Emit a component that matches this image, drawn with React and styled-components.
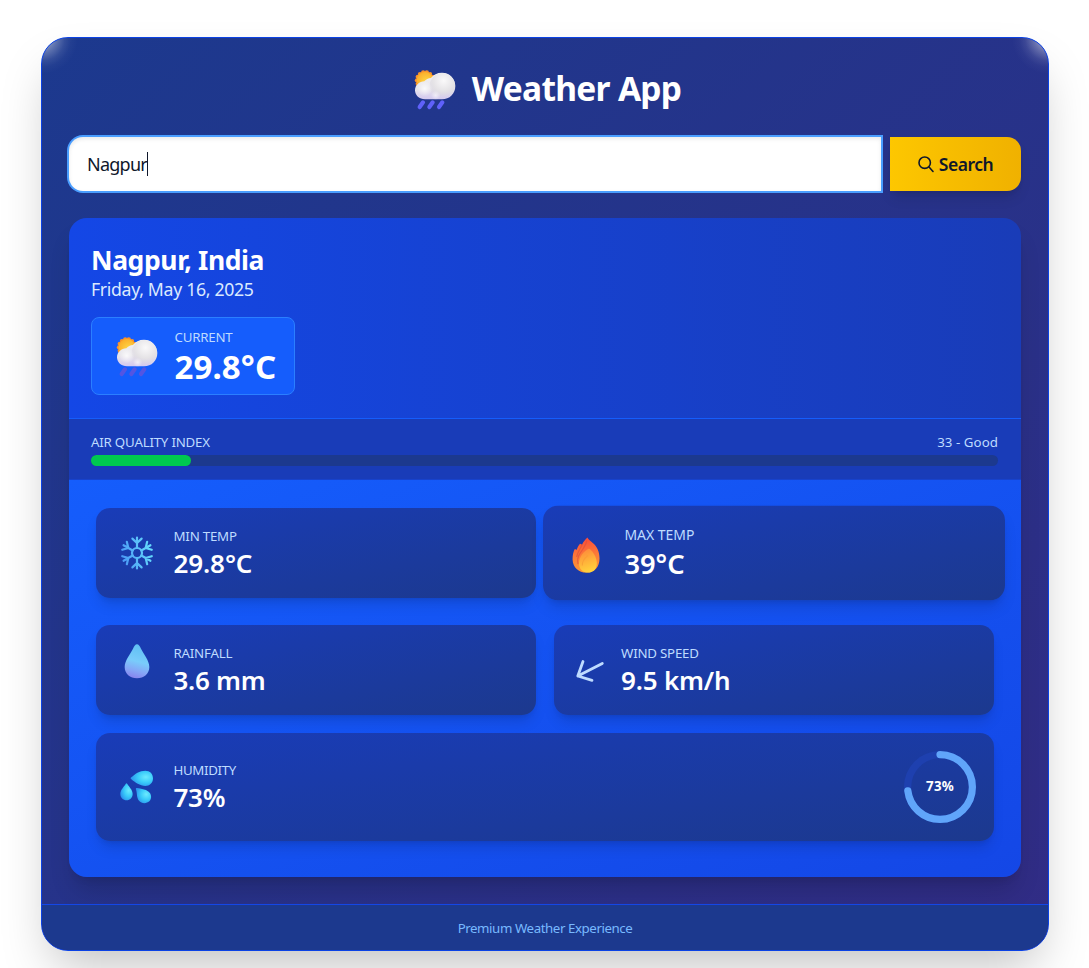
import React from 'react';
import styled, { createGlobalStyle } from 'styled-components';

const GlobalStyle = createGlobalStyle`
  *, *::before, *::after { box-sizing: border-box; }
  html, body { margin: 0; background: #fff; }
  body {
    height: 968px;
    overflow: hidden;
    font-family: "Noto Sans", "Open Sans", sans-serif;
    color: #fff;
  }
  svg { display: block; flex: none; overflow: visible; }
  h1, h2, p { margin: 0; }
`;

const Page = styled.main`
  display: flex;
  justify-content: center;
  padding-top: 37px;
  padding-left: 1px;
`;

const Shell = styled.section`
  width: 1008px;
  height: 914px;
  display: flex;
  flex-direction: column;
  overflow: hidden;
  border: 1px solid #0b42e4;
  border-radius: 27px;
  background:
    radial-gradient(circle at 0 0, rgba(255, 255, 255, 0.46) 8px, rgba(255, 255, 255, 0.28) 15px, rgba(255, 255, 255, 0.1) 23px, rgba(255, 255, 255, 0.03) 29px, rgba(255, 255, 255, 0) 36px),
    radial-gradient(circle at 100% 0, rgba(255, 255, 255, 0.46) 8px, rgba(255, 255, 255, 0.28) 15px, rgba(255, 255, 255, 0.1) 23px, rgba(255, 255, 255, 0.03) 29px, rgba(255, 255, 255, 0) 36px),
    linear-gradient(to bottom right, #1c398e, #312c85);
  box-shadow: 0 25px 50px -12px rgba(0, 0, 0, 0.25);
`;

const Content = styled.div`
  padding: 25px 27px 27px;
`;

const TitleBar = styled.header`
  display: flex;
  align-items: center;
  justify-content: center;
  height: 54px;
  gap: 16px;
  padding-left: 5px;
  margin-bottom: 20px;
`;

const Title = styled.h1`
  padding-bottom: 3px;
  font-size: 33.5px;
  line-height: 51px;
  font-weight: 700;
  letter-spacing: -0.7px;
`;

const SearchForm = styled.div`
  display: flex;
  gap: 8px;
  height: 54px;
  margin-bottom: 27px;
`;

const SearchField = styled.div`
  display: flex;
  align-items: center;
  width: 812px;
  margin-right: 1px;
  padding-left: 18px;
  border-radius: 14px 0 0 14px;
  background: #fff;
  color: #0f172b;
  font-size: 18px;
  letter-spacing: -0.75px;
  box-shadow: 0 0 0 2px #4a9eff, inset 0 2px 4px rgba(0, 0, 0, 0.09);
`;

const Caret = styled.span`
  width: 1px;
  height: 24px;
  background: #0f172b;
`;

const SearchButton = styled.button`
  flex: 1;
  display: flex;
  align-items: center;
  justify-content: center;
  gap: 5px;
  padding: 0;
  border: 0;
  border-radius: 0 14px 14px 0;
  background: linear-gradient(to right, #fdc700, #f0b100);
  color: #0f172b;
  font: 600 17.5px "Noto Sans", sans-serif;
  letter-spacing: -0.5px;
  box-shadow: 0 9px 14px -3px rgba(0, 0, 0, 0.12), 0 4px 6px -4px rgba(0, 0, 0, 0.12);
`;

const WeatherCard = styled.article`
  border-radius: 18px;
  overflow: hidden;
  box-shadow: 0 18px 24px -5px rgba(0, 0, 0, 0.16), 0 7px 9px -6px rgba(0, 0, 0, 0.12);
`;

const Summary = styled.div`
  height: 201px;
  padding: 25px 22px 0;
  border-bottom: 1px solid #155dfc;
  background: linear-gradient(to right, #1447e6, #193cb8);
`;

const Place = styled.h2`
  font-size: 26.5px;
  line-height: 34px;
  font-weight: 700;
  letter-spacing: -0.4px;
`;

const DateLine = styled.p`
  margin-bottom: 16px;
  color: #dbeafe;
  font-size: 17.7px;
  line-height: 24px;
  letter-spacing: -0.33px;
`;

const CurrentBox = styled.div`
  display: flex;
  align-items: center;
  gap: 16.5px;
  width: 204px;
  height: 78px;
  padding: 2px 0 0 24px;
  border: 1px solid #2b7fff;
  border-radius: 8px;
  background: #155dfc;
`;

const Label = styled.div`
  color: #bedbff;
  font-size: 13.3px;
  line-height: 20px;
  letter-spacing: ${(p) => p.$spacing || '-0.22px'};
  white-space: nowrap;
`;

const Reading = styled.div`
  font-size: ${(p) => (p.$large ? '33px' : '26px')};
  line-height: ${(p) => (p.$large ? '40px' : '34px')};
  font-weight: ${(p) => (p.$large ? 700 : 600)};
  letter-spacing: ${(p) => p.$spacing || '-0.3px'};
  white-space: nowrap;
`;

const AirQuality = styled.div`
  height: 61px;
  padding: 13px 23px 0 22px;
  border-bottom: 1px solid #1742cc;
  background: #193cb8;
`;

const AirRow = styled.div`
  display: flex;
  justify-content: space-between;
  margin-bottom: 3px;
`;

const Meter = styled.div`
  height: 11px;
  border-radius: 6px;
  background: #1c398e;
`;

const MeterFill = styled.div`
  height: 100%;
  border-radius: 6px;
  background: #00c950;
`;

const Metrics = styled.div`
  display: grid;
  grid-template-columns: 440px 440px;
  grid-template-rows: 99px 90px 108px;
  gap: 18px;
  padding: 28px 27px 36px;
  background: linear-gradient(to bottom right, #155dfc, #1447e6);
`;

const Metric = styled.div`
  display: flex;
  align-items: center;
  height: ${(p) => (p.$wide ? '108px' : '90px')};
  grid-column: ${(p) => (p.$wide ? '1 / -1' : 'auto')};
  padding: 0 18px 0 22.5px;
  border-radius: 14px;
  background: linear-gradient(to bottom right, #193cb8, #1c398e);
  box-shadow: 0 9px 14px -3px rgba(0, 0, 0, 0.13), 0 4px 6px -4px rgba(0, 0, 0, 0.13);
  transform: ${(p) => (p.$active ? 'scale(1.05)' : 'none')};
`;

const IconSlot = styled.div`
  display: flex;
  flex: none;
  justify-content: center;
  width: ${(p) => (p.$narrow ? '26px' : '36px')};
  margin-right: ${(p) => (p.$narrow ? '18.5px' : '19px')};
  padding-top: ${(p) => p.$lowered || 0}px;
  padding-bottom: ${(p) => (p.$raised ? '18px' : '0')};
`;

const MetricText = styled.div`
  flex: 1;
`;

const Gauge = styled.div`
  display: grid;
  place-items: center;
  width: 72px;
  height: 72px;
  > * { grid-area: 1 / 1; }
`;

const GaugeValue = styled.span`
  font-size: 13.3px;
  line-height: 20px;
  font-weight: 700;
  letter-spacing: 0.2px;
  padding-bottom: 3px;
`;

const Footer = styled.footer`
  flex: 1;
  display: flex;
  align-items: center;
  justify-content: center;
  border-top: 1px solid #1447e6;
  background: #1c398e;
  color: #78b9ff;
  font-size: 13.3px;
  letter-spacing: -0.43px;
`;

function SunRainIcon({ id, dim }) {
  const teeth = Array.from({ length: 14 }, (_, i) => {
    const a = (i / 14) * Math.PI * 2;
    return <circle key={i} cx={33 + Math.cos(a) * 24} cy={31 + Math.sin(a) * 24} r="6.5" />;
  });
  return (
    <svg width="42" height="41" viewBox="0 0 126 123">
      <defs>
        <radialGradient id={`${id}s`} cx="0.6" cy="0.6" r="0.6">
          <stop offset="0" stopColor="#ffda48" />
          <stop offset="1" stopColor="#fbb02c" />
        </radialGradient>
        <linearGradient id={`${id}c`} x1="0" y1="0" x2="0" y2="1">
          <stop offset="0" stopColor="#f4f3f5" />
          <stop offset="0.6" stopColor="#e6e4ea" />
          <stop offset="1" stopColor="#d3c8f0" />
        </linearGradient>
        <radialGradient id={`${id}b`} cx="0.55" cy="0.3" r="0.7">
          <stop offset="0" stopColor="#faf9fa" />
          <stop offset="0.6" stopColor="#e5e3e6" />
          <stop offset="1" stopColor="#d5d0dc" stopOpacity="0" />
        </radialGradient>
        <radialGradient id={`${id}l`} cx="0.5" cy="0.5" r="0.5">
          <stop offset="0" stopColor="#fff" />
          <stop offset="1" stopColor="#fff" stopOpacity="0" />
        </radialGradient>
      </defs>
      <g fill="#f9922a">{teeth}</g>
      <circle cx="33" cy="31" r="25" fill={`url(#${id}s)`} />
      <path
        d="M33 88C16 88 3 76 3 61C3 46 16 34 31 34C36 28 43 24 51 24C58 14 70 8 84 8C107 8 124 26 124 48C124 71 107 88 84 88Z"
        fill={`url(#${id}c)`}
      />
      <circle cx="85" cy="47" r="38" fill={`url(#${id}b)`} />
      <circle cx="32" cy="56" r="23" fill={`url(#${id}l)`} opacity="0.8" />
      <circle cx="65" cy="76" r="14" fill={`url(#${id}l)`} opacity="0.6" />
      <g stroke={dim ? '#5355e2' : '#5f61fa'} strokeWidth="12.5" strokeLinecap="round">
        <path d="M27 97L17 111" />
        <path d="M56 97L46 111" />
        <path d="M85 97L75 111" />
      </g>
    </svg>
  );
}

function SearchIcon() {
  return (
    <svg width="16" height="17" viewBox="0 0 16 17" fill="none" stroke="#0f172b" strokeWidth="1.6" strokeLinecap="round">
      <circle cx="6.7" cy="6.7" r="5.7" />
      <path d="M11 11L15 15.5" />
    </svg>
  );
}

function SnowIcon() {
  return (
    <svg width="34" height="34" viewBox="0 0 34 34" fill="none" stroke="url(#snow)" strokeWidth="2.2" strokeLinecap="round">
      <defs>
        <linearGradient id="snow" gradientUnits="userSpaceOnUse" x1="1" y1="17" x2="33" y2="10">
          <stop offset="0" stopColor="#4a98f6" />
          <stop offset="0.6" stopColor="#5cc4fa" />
          <stop offset="1" stopColor="#64dcfc" />
        </linearGradient>
      </defs>
      <circle cx="17" cy="17" r="5" />
      {[0, 60, 120, 180, 240, 300].map((a) => {
        const t = (a * Math.PI) / 180;
        const at = (x, y) =>
          `${17 + x * Math.cos(t) - y * Math.sin(t)} ${17 + x * Math.sin(t) + y * Math.cos(t)}`;
        return (
          <path
            key={a}
            d={`M${at(0.01, -5)}L${at(0, -15.5)}M${at(-4.6, -14.4)}L${at(0, -10)}L${at(4.6, -14.4)}`}
          />
        );
      })}
    </svg>
  );
}

function FireIcon() {
  return (
    <svg width="26" height="34" viewBox="0 0 80 106">
      <defs>
        <linearGradient id="flameOuter" x1="0.4" y1="0" x2="0.5" y2="1">
          <stop offset="0" stopColor="#fb4a3a" />
          <stop offset="0.5" stopColor="#fb7a38" />
          <stop offset="1" stopColor="#fd9a35" />
        </linearGradient>
        <linearGradient id="flameInner" x1="0.35" y1="0" x2="0.6" y2="1">
          <stop offset="0" stopColor="#fd8a3a" />
          <stop offset="0.55" stopColor="#ffb53a" />
          <stop offset="1" stopColor="#ffd53d" />
        </linearGradient>
      </defs>
      <path
        d="M44 1C38 7 32 14 28 22C26 20 24 19 22 19C17 24 14 31 12 38C10 36 8 36 6 36C2 44 0 54 0 66C1 90 18 105 41 105C65 105 80 88 80 63C80 42 72 27 60 17C53 12 47 7 44 1Z"
        fill="url(#flameOuter)"
      />
      <path
        d="M28 22C24 32 15 44 12 58M42 10C40 24 30 36 22 48C14 60 14 70 16 80"
        fill="none"
        stroke="#e0503c"
        strokeWidth="3.5"
        opacity="0.7"
      />
      <path
        d="M46 35C34 42 19 58 19 78C19 94 30 105 46 105C63 105 73 92 72 75C71 60 62 45 52 36C50 34 48 34 46 35Z"
        fill="url(#flameInner)"
      />
      <path d="M46 54C36 62 28 72 29 84" fill="none" stroke="#f79a34" strokeWidth="3" opacity="0.7" />
    </svg>
  );
}

function DropIcon() {
  return (
    <svg width="26" height="35" viewBox="0 0 78 105">
      <defs>
        <linearGradient id="drop" x1="0.6" y1="0" x2="0.4" y2="1">
          <stop offset="0" stopColor="#5fc0f3" />
          <stop offset="0.5" stopColor="#79ccfb" />
          <stop offset="0.78" stopColor="#85a6f6" />
          <stop offset="1" stopColor="#8783ee" />
        </linearGradient>
      </defs>
      <path
        d="M39 1C34 1 31 6 27 14C19 30 2 49 2 69C2 89 18 103 39 103C60 103 76 89 76 69C76 49 59 30 51 14C47 6 44 1 39 1Z"
        fill="url(#drop)"
      />
    </svg>
  );
}

function ArrowIcon() {
  return (
    <svg width="28" height="22" viewBox="0 0 28 22" fill="none" stroke="#bedbff" strokeWidth="2.8" strokeLinecap="round" strokeLinejoin="round">
      <path d="M26.3 3.5L1.8 16M7 1.5L1.8 16L16 20.3" />
    </svg>
  );
}

function DropletsIcon() {
  return (
    <svg width="34" height="34" viewBox="0 0 102 102">
      <defs>
        <radialGradient id="splash" cx="0.68" cy="0.42" r="0.7">
          <stop offset="0" stopColor="#6ceaff" />
          <stop offset="0.5" stopColor="#3accfa" />
          <stop offset="1" stopColor="#2a92ee" />
        </radialGradient>
      </defs>
      <g fill="url(#splash)">
        <path d="M34 22C45 12 58 2 76 2C90 2 99 11 99 25C99 39 89 48 76 48C60 48 45 37 34 28C31 26 31 24 34 22Z" />
        <path d="M22 42C28 51 38 60 38 72C38 83 30 91 20 91C9 91 1 83 1 72C1 60 11 51 17 42C19 39 20 39 22 42Z" />
        <path d="M52 54C62 57 76 57 86 65C95 72 96 86 88 94C79 102 64 101 57 92C49 82 52 69 48 59C47 55 48 53 52 54Z" />
      </g>
    </svg>
  );
}

function HumidityRing({ value }) {
  const c = 2 * Math.PI * 32.4;
  return (
    <svg width="72" height="72" viewBox="0 0 72 72" fill="none" strokeWidth="7.2">
      <circle cx="36" cy="36" r="32.4" stroke="#1e40af" />
      <circle
        cx="36"
        cy="36"
        r="32.4"
        stroke="#60a5fa"
        strokeLinecap="round"
        strokeDasharray={`${(c * value) / 100} ${c}`}
        transform="rotate(-90 36 36)"
      />
    </svg>
  );
}

export default function App() {
  return (
    <Page>
      <GlobalStyle />
      <Shell>
        <Content>
          <TitleBar>
            <SunRainIcon id="head" />
            <Title>Weather App</Title>
          </TitleBar>
          <SearchForm>
            <SearchField>Nagpur<Caret /></SearchField>
            <SearchButton><SearchIcon />Search</SearchButton>
          </SearchForm>
          <WeatherCard>
            <Summary>
              <Place>Nagpur, India</Place>
              <DateLine>Friday, May 16, 2025</DateLine>
              <CurrentBox>
                <SunRainIcon id="now" dim />
                <div>
                  <Label>CURRENT</Label>
                  <Reading $large $spacing="0.1px">29.8°C</Reading>
                </div>
              </CurrentBox>
            </Summary>
            <AirQuality>
              <AirRow>
                <Label>AIR QUALITY INDEX</Label>
                <Label $spacing="0.05px">33 - Good</Label>
              </AirRow>
              <Meter><MeterFill style={{ width: `${33 / 3}%` }} /></Meter>
            </AirQuality>
            <Metrics>
              <Metric>
                <IconSlot><SnowIcon /></IconSlot>
                <MetricText><Label>MIN TEMP</Label><Reading $spacing="-0.1px">29.8°C</Reading></MetricText>
              </Metric>
              <Metric $active>
                <IconSlot $lowered={4}><FireIcon /></IconSlot>
                <MetricText><Label $spacing="0px">MAX TEMP</Label><Reading $spacing="0px">39°C</Reading></MetricText>
              </Metric>
              <Metric>
                <IconSlot $raised><DropIcon /></IconSlot>
                <MetricText><Label>RAINFALL</Label><Reading>3.6 mm</Reading></MetricText>
              </Metric>
              <Metric>
                <IconSlot $narrow $lowered={2}><ArrowIcon /></IconSlot>
                <MetricText><Label>WIND SPEED</Label><Reading $spacing="-0.2px">9.5 km/h</Reading></MetricText>
              </Metric>
              <Metric $wide>
                <IconSlot><DropletsIcon /></IconSlot>
                <MetricText><Label $spacing="-0.35px">HUMIDITY</Label><Reading>73%</Reading></MetricText>
                <Gauge><HumidityRing value={73} /><GaugeValue>73%</GaugeValue></Gauge>
              </Metric>
            </Metrics>
          </WeatherCard>
        </Content>
        <Footer>Premium Weather Experience</Footer>
      </Shell>
    </Page>
  );
}
